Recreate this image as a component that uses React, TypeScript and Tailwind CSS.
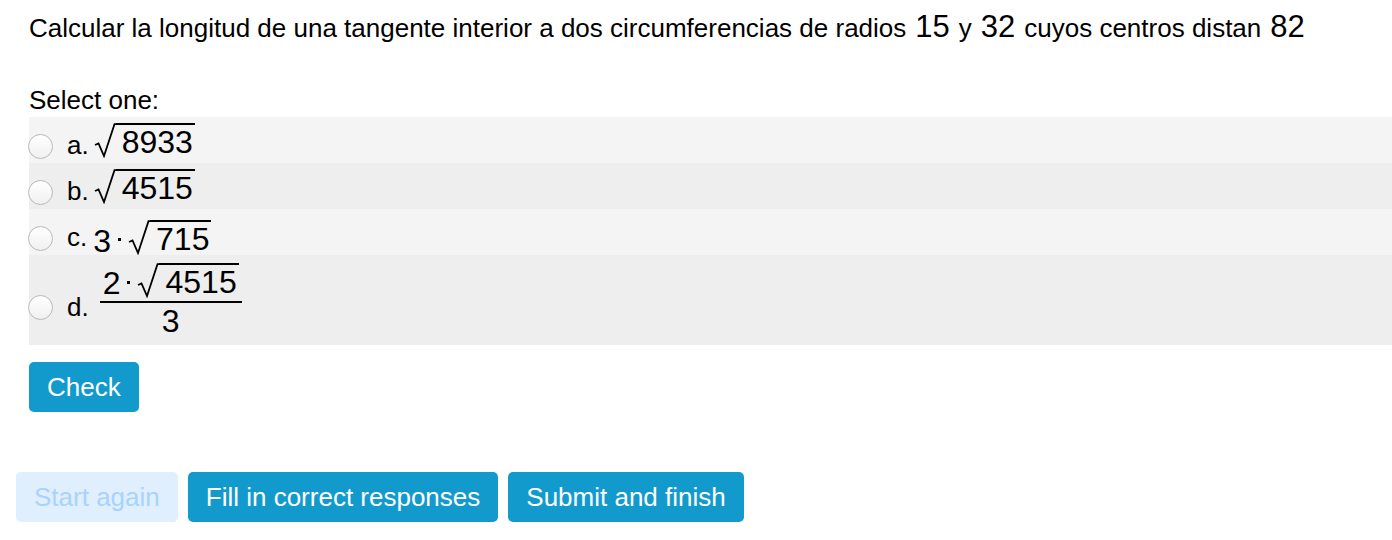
import React from "react";

const font = { fontFamily: '"Liberation Sans", Arial, Helvetica, sans-serif' };

function Radical() {
  return (
    <svg width="22" height="35" viewBox="0 0 22 35" className="shrink-0">
      <path d="M1 22 L4.5 20.5 L10 33 L20.5 1.2 L22 1.2" fill="none" stroke="#000" strokeWidth="1.8" strokeLinejoin="miter" />
    </svg>
  );
}

function Sqrt({ n }: { n: string }) {
  return (
    <span className="inline-flex items-start">
      <Radical />
      <span className="border-t-2 border-black pl-[6px] pr-[2px] pt-[1px] text-[32px] leading-[32px]">{n}</span>
    </span>
  );
}

function Radio({ className = "" }: { className?: string }) {
  return (
    <span className={`w-[25px] h-[25px] shrink-0 rounded-full border border-[#b9b9b9] bg-gradient-to-b from-white to-[#f0f0f0] ${className}`} />
  );
}

const Dot = () => <span className="w-[3px] h-[3px] bg-black mx-[7px] mt-[4px] shrink-0" />;

export default function App() {
  return (
    <div style={font} className="bg-white text-black w-[1392px] h-[540px] overflow-hidden">
      <div className="pl-[29px] pt-[9px]">
        <p className="text-[26px] leading-[36px] flex items-baseline whitespace-nowrap">
          Calcular la longitud de una tangente interior a dos circumferencias de radios
          <span className="text-[31px] mx-[9px]">15</span>y
          <span className="text-[31px] mx-[9px]">32</span>cuyos centros distan
          <span className="text-[31px] ml-[9px]">82</span>
        </p>
        <p className="text-[26px] leading-[28px] mt-[40px]">Select one:</p>
        <div className="mt-[3px] text-[26px]">
          <div className="h-[46px] bg-[#f4f4f4] flex items-center">
            <Radio className="mt-[12px] -ml-[1px]" />
            <span className="ml-[14px] mt-[10px]">a.</span>
            <span className="ml-[5px] mt-[11px]"><Sqrt n="8933" /></span>
          </div>
          <div className="h-[46px] bg-[#eeeeee] flex items-center">
            <Radio className="mt-[12px] -ml-[1px]" />
            <span className="ml-[14px] mt-[10px]">b.</span>
            <span className="ml-[5px] mt-[11px]"><Sqrt n="4515" /></span>
          </div>
          <div className="h-[46px] bg-[#f4f4f4] flex items-center">
            <Radio className="mt-[12px] -ml-[1px]" />
            <span className="ml-[14px] mt-[10px]">c.</span>
            <span className="ml-[6px] mt-[11px] flex items-center">
              <span className="text-[32px] leading-[32px] mt-[6px]">3</span>
              <Dot />
              <Sqrt n="715" />
            </span>
          </div>
          <div className="h-[90px] bg-[#eeeeee] flex items-center">
            <Radio className="mt-[14px] -ml-[1px]" />
            <span className="ml-[14px] mt-[14px]">d.</span>
            <span className="ml-[11px] mt-[0px] flex flex-col items-stretch">
              <span className="flex items-center justify-center px-[3px]">
                <span className="text-[32px] leading-[32px] mt-[6px]">2</span>
                <Dot />
                <Sqrt n="4515" />
              </span>
              <span className="h-[2px] bg-black mt-[2px]" />
              <span className="text-center text-[32px] leading-[36px]">3</span>
            </span>
          </div>
        </div>
        <button className="mt-[17px] h-[50px] px-[18px] rounded-[5px] bg-[#129acc] text-white text-[26px]">Check</button>
      </div>
      <div className="pl-[16px] mt-[60px] flex gap-[10px]">
        <button className="h-[50px] px-[18px] rounded-[5px] bg-[#e0effe] text-[#a8d3ff] text-[26px]">Start again</button>
        <button className="h-[50px] px-[18px] rounded-[5px] bg-[#129acc] text-white text-[26px]">Fill in correct responses</button>
        <button className="h-[50px] px-[18px] rounded-[5px] bg-[#129acc] text-white text-[26px]">Submit and finish</button>
      </div>
    </div>
  );
}
